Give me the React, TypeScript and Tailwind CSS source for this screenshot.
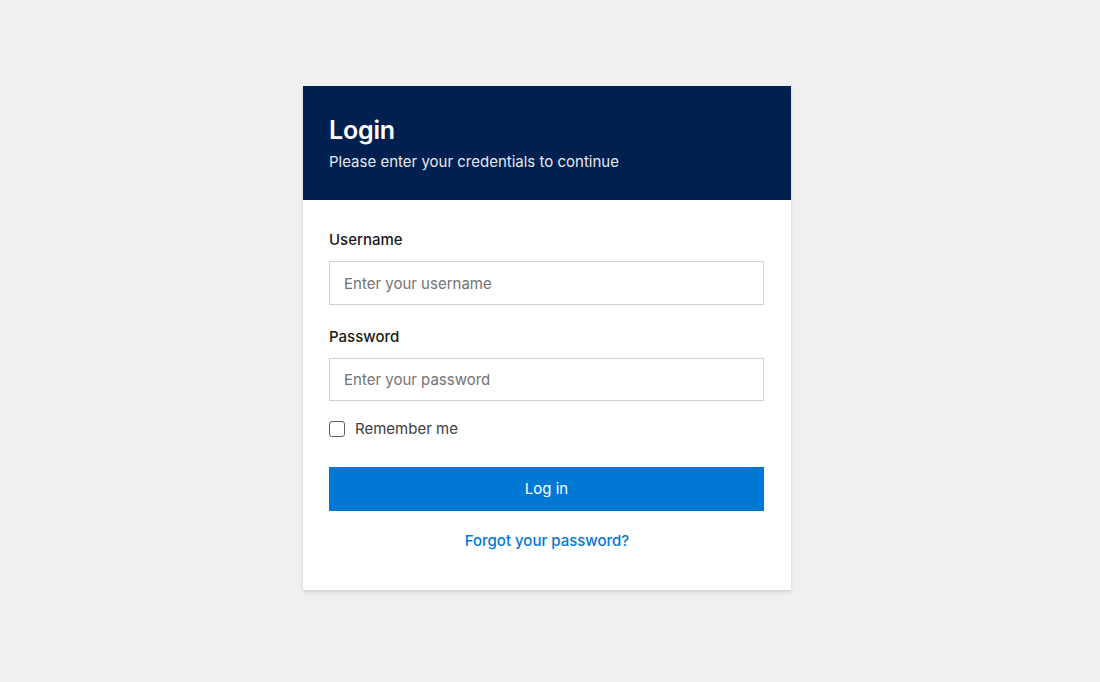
export default function App() {
  return (
    <main
      className="min-h-screen w-full bg-[#f0f0f0] flex justify-center pt-[86px] pr-[6px]"
      style={{ fontFamily: "Inter, 'Noto Sans', sans-serif" }}
    >
      <div className="w-[488px] h-[504px] bg-white shadow-[0_2px_4px_rgba(0,0,0,0.14)] flex flex-col">
        <div className="bg-[#002050] px-[26px] pt-[28px] h-[114px]">
          <h1 className="text-[25px] leading-[32px] font-semibold text-white tracking-[-0.2px]">Login</h1>
          <p className="mt-[6px] text-[15px] leading-[20px] text-[#e6e9f0]">
            Please enter your credentials to continue
          </p>
        </div>

        <form className="flex flex-col px-[26px] pt-[30px]" onSubmit={(e) => e.preventDefault()}>
          <label className="text-[15px] leading-[20px] font-medium text-[#1a1a1a]">Username</label>
          <input
            type="text"
            placeholder="Enter your username"
            className="mt-[11px] w-[435px] h-[44px] border border-[#cfd1d6] px-[14px] text-[15px] text-[#1a1a1a] placeholder:text-[#737373] outline-none"
          />

          <label className="mt-[22px] text-[15px] leading-[20px] font-medium text-[#1a1a1a]">Password</label>
          <input
            type="password"
            placeholder="Enter your password"
            className="mt-[11px] w-[435px] h-[43px] border border-[#cfd1d6] px-[14px] text-[15px] text-[#1a1a1a] placeholder:text-[#737373] outline-none"
          />

          <label className="mt-[18px] flex items-center gap-[10px] cursor-pointer">
            <input
              type="checkbox"
              className="appearance-none w-[16px] h-[16px] border border-[#5f5f5f] rounded-[3px] bg-white"
            />
            <span className="text-[15px] leading-[20px] text-[#3d3d3d]">Remember me</span>
          </label>

          <button
            type="submit"
            className="mt-[28px] w-[435px] h-[44px] bg-[#0078d4] text-white text-[15px]"
          >
            Log in
          </button>

          <a href="#" className="mt-[20px] self-center text-[15px] leading-[20px] text-[#0078d4] font-medium">
            Forgot your password?
          </a>
        </form>
      </div>
    </main>
  );
}
